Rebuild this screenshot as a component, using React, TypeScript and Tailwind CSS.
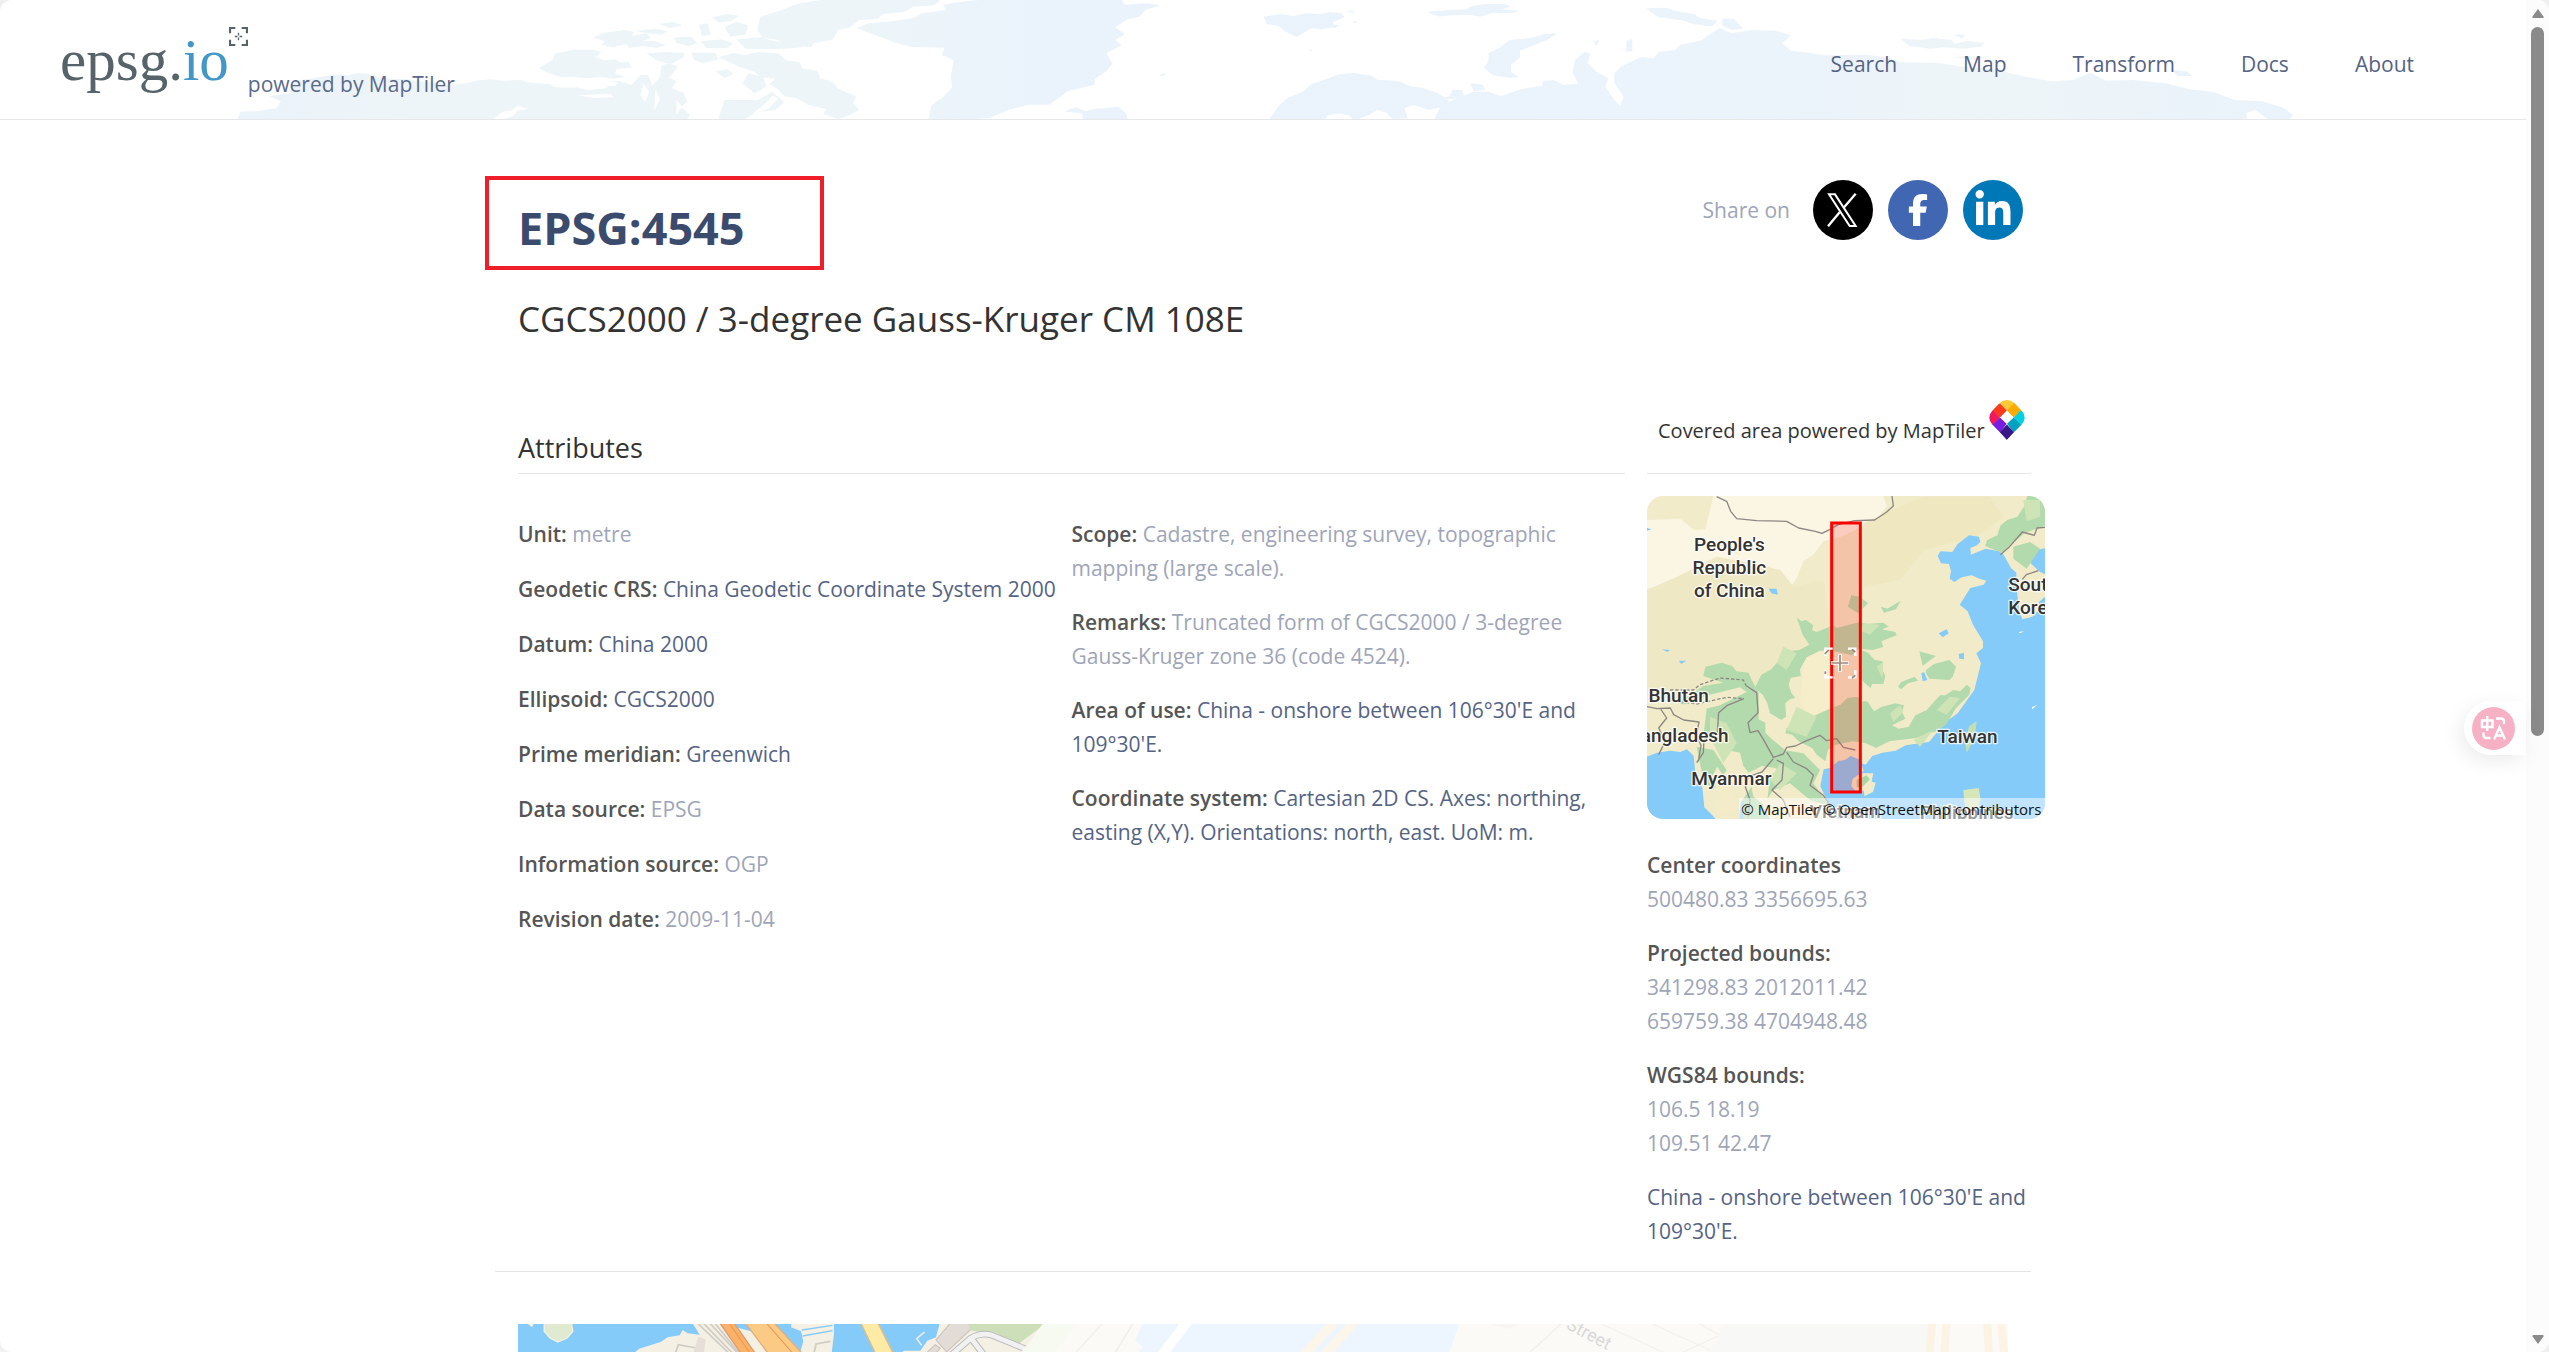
import { FaFacebookF, FaLinkedinIn } from "react-icons/fa6";

const navItems = ["Search", "Map", "Transform", "Docs", "About"];

const attributes = [
  { label: "Unit:", value: "metre" },
  { label: "Geodetic CRS:", value: "China Geodetic Coordinate System 2000", link: true },
  { label: "Datum:", value: "China 2000", link: true },
  { label: "Ellipsoid:", value: "CGCS2000", link: true },
  { label: "Prime meridian:", value: "Greenwich", link: true },
  { label: "Data source:", value: "EPSG" },
  { label: "Information source:", value: "OGP" },
  { label: "Revision date:", value: "2009-11-04" },
];

const details = [
  { label: "Scope:", value: "Cadastre, engineering survey, topographic mapping (large scale)." },
  { label: "Remarks:", value: "Truncated form of CGCS2000 / 3-degree Gauss-Kruger zone 36 (code 4524)." },
  { label: "Area of use:", value: "China - onshore between 106°30'E and 109°30'E.", link: true },
  {
    label: "Coordinate system:",
    value: "Cartesian 2D CS. Axes: northing, easting (X,Y). Orientations: north, east. UoM: m.",
    link: true,
  },
];

const bounds = [
  { label: "Center coordinates", lines: ["500480.83 3356695.63"] },
  { label: "Projected bounds:", lines: ["341298.83 2012011.42", "659759.38 4704948.48"] },
  { label: "WGS84 bounds:", lines: ["106.5 18.19", "109.51 42.47"] },
];

const WorldBackdrop = () => (
  <svg
    className="absolute inset-0 h-full w-full"
    viewBox="-133.5 0 1686 357"
    preserveAspectRatio="none"
    aria-hidden="true"
  >
    <defs>
      <linearGradient id="land" gradientUnits="userSpaceOnUse" x1="0" y1="0" x2="1400" y2="0">
        <stop offset="0" stopColor="#eaf2fb" />
        <stop offset="0.1" stopColor="#edf5f8" />
        <stop offset="0.3" stopColor="#edf5f8" />
        <stop offset="0.4" stopColor="#eaf3fb" />
        <stop offset="0.75" stopColor="#ebf3fb" />
        <stop offset="0.85" stopColor="#edf5f8" />
        <stop offset="1" stopColor="#eaf2fb" />
      </linearGradient>
    </defs>
    <g fill="url(#land)">
      <path d="M25 357l2-22 12-2 12-8 3-22-8-14 8-6 6-3 2-38 15-8 13-11 9 3 6-7 7 2 8 10 9 6 10 0 7 8 10 0 8 10 12-4 10-10 8-3 8 4 12-2 6 8 13 4 4 10 14 0 8 8 12-5 3-20 6-2 8 12 6-30 5 0 3 32 5-26 1-34 5-8 6 12-6 32 5 10-3 22 8 14 2 26-4 16 6 24-2 14z" />
      <path d="M226 205l9-24 2-20 12-12 14 0 5 8-4 14 6 10 7-3 4 10 5-4 2 20-10 2-1 14 7 12-8 4-10-4-8 4-9-6-8 2-9-14z" />
      <path d="M262 112l8-14 14-8 6 6-2 12 10-8 3 14-6 10 8-2 8 14-6 8-10-6-8 6-3-12-8 10-8-6 2-12z" />
      <path d="M290 92l14-6 8 8-4 10-10-4zM306 72l10-6 6 10-8 8zM316 112l12-2 4 20-6 8-8-10zM333 74l6-4 2 34-6 4zM342 52l10-10 8 6-6 16-8 4zM350 80l8-14 8 10-2 28-10 6zM334 124l14-6 8 12-4 14-14 0zM358 118l16-6 10 12 14 4 4 14-16 6-22-2z" />
      <path d="M298 160l14-4 12 4-2 14-8 18-8-8zM328 158l16 0 2 20-10 12-6-10z" />
      <path d="M346 172l10-12 8 6 8-10 14 4 6 22 8 4 2 20 10 6 2 22 8 12 4 20 12 24-2 18 4 22-8 18-6 9-10-14 2-16-12-12-8-20-8-6-4-20-6-18 4-14-10-6-4-16-10-14z" />
      <path d="M350 300l22 0 10-24 8 30-6 24-12 6-8 21-18 0zM344 214l8-6 4 14-6 12zM366 220l10 10 2 30-8 20-8-30z" />
      <path d="M372 92l2-42 12-16 14-24 14-10 80 0-4 16-14 4-6 16-14 6-4 16-12 2-6 22-8 8-4 30-12 8-2 14-14-4-10-20-8-4z" />
      <path d="M438 84l8-14 12-4 18-12 6-14 16-10-2-16 10-8 14-6 95 0 2 14 16-4 8 6-10 14-4 20-8 8-8 24 6 20-6 18 4 16-10 24 4 30-4 24-8 24 0 16-18 20-12 40-14 0-12 14-14 26-8 2-1 5-32 0 2-44 8-26 6-30-1-30 2-50-8-16 2-22-22-2-10-12z" />
      <path d="M577 334l8-12 6 12 6-8 8-2 8-4 5 20 1 17-30 0 0-16z" />
      <path d="M710 50l12-8 8 6 8-8 10 2 6-6 8 4 2 12-8 14 2 14-10 8-6-4-6 16-4 10-8-16-4-16-8-6zM752 76l8-2-2 10zM768 64l4 0 0 6z" />
      <path d="M819 36l14-6 12-2 4-10 8-6 14 0 4 8-6 8 12 4-6 8-12-2-8 12-8-6-12 2-8 4zM765 36l4-4 2 6z" />
      <path d="M906 100l-8 2-10 12-14 6-6 22-8 18 0 22-3 22 6 22 12 8 5-4-5-14 0-22 6-22 0-20 10-18 8-14z" />
      <path d="M714 357l6-40 6-24 10-18 6-24 10-14 8-14 10-4 12 8 4 12 14 4 8 16 8 4 10 16 8 24-4 18-10 8-10-14-6 10 2 30-10 2-4-18-6-10-6 16-8 14z" />
      <path d="M836 270l6 0 2 20-6 6-10 2 6-10zM848 250l8 4 2 16-8 4z" />
      <path d="M824 357L828 317 838 297 850 275 860 275 868 289 882 267 896 257 896 243 904 241 910 255 920 251 916 215 918 179 924 157 928 161 926 189 932 215 940 235 938 261 944 299 948 319 950 289 944 249 944 221 948 201 962 171 970 175 974 155 984 151 988 135 1002 121 1008 103 1014 84 1022 100 1036 90 1052 92 1062 106 1056 130 1062 152 1074 158 1084 166 1112 164 1126 172 1134 186 1162 190 1176 200 1196 206 1216 228 1236 244 1250 240 1262 218 1272 242 1290 240 1312 250 1328 268 1344 276 1358 300 1376 304 1390 322 1397 344 1395 357z" />
      <path d="M965 25l14-2 6 10 12 8 4 12 12 10-4 16-12-6-8-12-16-10zM1016 56l8 0 6 30-8 4-6-14zM952 122l4-4 0 34-4 4zM930 124l4-4-2 18z" />
      <path d="M1135 116l14 4 8-6 12 6 2 12 8-10 12 6-2 12-12 6-14-4-8 4-14-8zM1170 102l8 2-2 12zM1170 172l10-4 12 4-6 8zM1316 210l10 4 4 14-10 0z" />
      <path d="M640 224l5-4-3 10zM740 148l2 0 0 8z" />
    </g>
    <g fill="#fff">
      <path d="M196 357l6-22 6-4 4-14 7 10-7 4-3 18-6 8zM245 238l26-6-8 12 16 4-2 10-24 2 4-14zM252 286l22-4 2 10-14 2zM296 250l4 26-3 30-3-22zM304 268l3 30-4 34zM318 300l4 20-4 22zM753 346l6-6 8 6 2 11-18 0z" />
      <path d="M1366 338l6-8 8 27-14 0zM376 316l6-28 4 6-6 30-12 20z" />
    </g>
  </svg>
);

const Logo = () => (
  <a href="#" className="flex items-end pt-2 text-[21px] leading-[34px] text-[#5a6a8c]">
    <span className="flex items-start pb-2">
      <span className="font-['Liberation_Serif',serif] text-[59px] leading-[66px] text-[#566369]">
        epsg.<span className="text-[#4296c8]">io</span>
      </span>
      <svg width="19" height="19" viewBox="0 0 18 18" fill="none" stroke="#566369" aria-hidden="true">
        <path strokeWidth="2" d="M1 6V1H6M12 1H17V6M17 12V17H12M6 17H1V12" />
        <path strokeWidth="1.2" d="M9 5.5V8M9 10V12.5M5.5 9H8M10 9H12.5" />
      </svg>
    </span>
    <span>powered by MapTiler</span>
  </a>
);

const MapTilerIcon = () => (
  <svg className="h-10 w-9" viewBox="1031 720 103 117" aria-hidden="true">
    <clipPath id="pin">
      <path d="M1082 720q13 0 21 8l22 23q18 20 1 40l-44 46-43-46q-17-20 1-40l22-23q8-8 20-8z" />
    </clipPath>
    <g clipPath="url(#pin)">
      <path fill="#fbc935" d="M1082 700l30 30-30 21-20-21-10-10z" />
      <path fill="#ffaa01" d="M1082 751l20-21 30 0-10 22-20 19z" />
      <path fill="#fb3a1b" d="M1062 730l20 21-20 20-22-20-8-21z" />
      <path fill="#f1175d" d="M1042 751l20 20-20 22-20 0 0-42z" />
      <path fill="#05d0df" d="M1122 751l-20 20 20 22 20 0 0-42z" />
      <path fill="#781ee3" d="M1062 771l20 18-20 26-22-20 2-4z" />
      <path fill="#00a1c1" d="M1102 771l-20 18 20 26 22-20-2-4z" />
      <path fill="#3a1888" d="M1082 792l21 22-21 24-21-24z" />
    </g>
    <path fill="#fff" d="M1082 752l19 19-19 19-19-19z" />
  </svg>
);

const CoverageMap = () => (
  <svg
    className="-mr-[14px] block h-[323px] w-[398px] shrink-0 rounded-2xl"
    viewBox="51 48 1194 969"
    role="img"
    aria-label="Covered area"
  >
    <rect x="51" y="48" width="1194" height="969" fill="#f2ebc9" />
    {/* dry land */}
    <path
      fill="#fbf5e4"
      d="M250 48h510l10 30-30 40-60 30-40 20-60 16-30 40-30 20-20 50-20 30-40-24-20-40-60-12-50-40-30-22-60 10-60-14-40 30-60-30-14-30 60-10 60 10 60-4z"
    />
    <path fill="#fbf5e4" d="M51 120l100-4 60 50 120 60 60 10-60 20-120 20-90 40-70 10z" />
    <path
      fill="#efe8c4"
      d="M51 330l90-40 120-60 100 20 90 20 40 50 90-20 20 150-100 80-60 80-70 30-110-10-100 40-110-40z"
    />
    <path fill="#f6eecb" d="M540 500l60-10 20 50-10 100 30 80-30 60-70-40-30-80 10-100z" />
    <path fill="#efe7bf" d="M700 130l180-80 200 0 40 60-80 60-40 10-120 30-70 90-110 20z" />
    {/* sea */}
    <g fill="#84cbfa">
      <path d="M1245 205l-30 6-16 16 4 24 26 24 16 8zM1245 350l-18 16 0 24-20 20-30 8-10-30-8-70 0-40-16-14-22-40-14-10-40-8-30 12-14 6-2-20 20-8 10-10-4-16-30-4-34 26-16 24-36-2-8 14 10 22 24 2 6 22-4 22 14 10 22-14 30-6 24 10 20 6-8 12-40 10-32 50 24 20 16 40 30 50 0 20-20 16 14 30-20 80-50 70-36 26-50 60-70 10-30 16-40 6-30 10-20 26-16-6 10 24-10 6 6 20 40 10-8 28-30 14-30-12-10-24 20-26-10-30-20-16-24 0-14 20-30 6-10 50 40 90 40 20 0 20h600z" />
      <path d="M692 840l-30-12-14 10-36 14-24 30 0 30 16 24 30 40 40 40 30-60z" />
      <path d="M51 830l30-12 40-6 30 4 20-8 20 20 6 60 20 34 6 60 24 24 10 11H51zM327 1017l6-50 20-24 36 20 30 54z" />
      <path d="M416 326l24 0 4 18-20-4zM96 508l24 2-8 6zM146 542l22 0-14 10zM926 460l24-12 6 12-18 12zM874 580l8-4 10 24-14 4zM986 522l16-4 0 20-14-2zM51 144l14 4-14 4z" />
    </g>
    {/* islands */}
    <path fill="#c3dfb2" d="M1004 780l14-42 22-14-6 50-24 44z" />
    <path fill="#f4ebc8" d="M668 896l24-16 38 0-6 28-24 24-24 0-12-14z" />
    <path fill="#a9d8a7" d="M680 900l30-14 10 12-24 24-16 0z" />
    <path fill="#d7e6b9" d="M1000 930l46-6 6 34-14 40 10 19-36 0-8-44z" />
    <path fill="#fff" d="M1166 456l16-2-12 6zM1206 688l16-14-16 8z" />
    {/* forest */}
    <g fill="#b3daac">
      <path d="M500 412l14 12 14-4 22 16-4 14 14 6 50-20 10 8 70-18 20 6 50-4 16 12-20 8 40 8 4 10-46 18 6 16-30 10-44-4-20 20-60-14-36 0-40 20-20 36 2 20-30 6-6 20 8 24 12 16-16 4-14 12 2 40-14 10-34-20-8-30-14-26-24-20 20-40 30-16 20-24 30-30 34-4 30-16-20-30z" />
      <path d="M694 510l20 8 20 22 24 4-4 20 12 24-6 24-34 0-4 12-24-20-6-10zM690 350l24 20-30 30-30-20 10-34zM752 380l20 6 40-24-14 26-36 10z" />
      <path d="M612 680l20-6 20-20 30-4 14 14 16 0 20 30 24-14 40-10 26 6-6 20 10 20-40 20 20 10 30-6 20-34 34-16 40-44 16 0 24-16 20 4 20-20 12 10-4 20-40 40-30 50-30 20-60 20-80 10-40 20-30-14-40-6-50 10-24 16-8 34-26-20-14-20-40-20-20-20-20-4 4-16 20-8z" />
      <path d="M804 620l10-14 40-16 10 12-30 8-20 18zM868 514l50 14-14 10-26 20zM888 570l24-18 46-12 20 20-10 30-10 10-60-4-10-16z" />
      <path d="M226 560l50-12 30 10 14 16 36 4 10 24 20 36 0 80 20 10 0 30 20 20 50 40-20 60-20-14-40-6-40 20-16-20-10-40-50-10-20-30-40-10 10-80-90-20 50-30 30-20 60-10-60-20z" />
      <path d="M1072 180l30-14 10-30 20-16 30-10 20-30 10-32h53v90l-60 20-70 60-50-20zM1150 200l50-14 30 20-40 60-40-30z" />
      <path d="M460 810l60 10 50 50-20 40 50 70-60-20-60-50-50 20-40 60 30 27-80 0 0-60 40-60 60-20z" />
      <path d="M200 800l50 10 40 60-40 60-30-30zM536 750l60-14 16 24-56 10z" />
    </g>
    <g fill="#cfe4b6">
      <path d="M240 710l50 20 30 60-40 60-40-80zM460 500l40 20-30 50-30-20zM1180 60l50 0 0 50-40 14zM500 680l60 30-30 60-60-20zM450 850l50 30-50 50-30-30z" />
      <path d="M920 690l40-40 30 4-40 50zM740 560l20-14-2 50zM850 780l60-30-40 50zM700 430l50 4-30 30-24-10zM780 700l30-24 10 20-30 30z" />
    </g>
    <path fill="#f4ebc8" d="M262 860l40 60 20 60-50 30-12-20 10-40-24-60zM370 870l50 20-10 90-40-30-10-50z" />
    <path fill="#f2ebc9" d="M120 690l120-46 90-22 20 14-80 40-120 30z" />
    {/* borders */}
    <g fill="none" stroke="#8c8782" strokeWidth="4" strokeLinejoin="round">
      <path d="M260 50l30 14 12 30 18 22 60 6 90 2 36 20 50 10 20 6 24-12 24-14 50-12 60-2 36-24 20-18-4-30" />
      <path d="M1245 142l-24 2-8 22-36-10-40 46-26 22M1225 272l-36 12-12 14" />
      <path d="M51 680l30 6 40-2 10 20 30 16 46 6-8 40 14 30-8 48M90 684l20 30-24 30 20 40-20 40" />
      <path d="M342 656l-50 20-26 22-4 60-40 20-2 40-20 30M350 618l30 20 4 60-30 30 6 30 24-6 16 26 30 54 30-10 10-20 26-4 34-16 40-16 20 16 30-6 20 26 36 8" />
      <path d="M430 836l-34 40-40 14-10 30 14 40-6 50M440 840l20 10-4 50-30 30 34 30 20 50M470 816l20 30 40 20 20 20-10 30 40 30 40 60 20 20" />
      <path strokeDasharray="10 6" d="M120 630l70 0 20-16 60-20 70 6 10 20M120 660l80 12 90-20 50 4" />
    </g>
    {/* covered area */}
    <rect x="605" y="129" width="86" height="807" fill="#ff2828" fillOpacity="0.2" stroke="#f00" strokeWidth="9" />
    <g fill="none">
      <path stroke="#fff" strokeWidth="7" d="M586 528v-22h22M654 506h22v22M676 570v22h-22M608 592h-22v-22" />
      <path stroke="#8f8a80" strokeWidth="5" d="M584 522l12-12M666 508l10 8M676 586l-10 8M586 574v8" />
      <path stroke="#fff" strokeWidth="11" d="M630 522v54M603 549h54" />
      <path stroke="#a08878" strokeWidth="5" d="M630 524v50M605 549h50" />
    </g>
    <g
      className="font-['Roboto',sans-serif] text-[57px] font-medium"
      fill="#333"
      stroke="#fff"
      strokeOpacity="0.8"
      strokeWidth="8"
      paintOrder="stroke"
      strokeLinejoin="round"
      textAnchor="middle"
    >
      <text x="298" y="214">People's</text>
      <text x="298" y="283">Republic</text>
      <text x="298" y="351">of China</text>
      <text x="146" y="667">Bhutan</text>
      <text x="296" y="787" textAnchor="end">Bangladesh</text>
      <text x="304" y="914">Myanmar</text>
      <text x="1012" y="790">Taiwan</text>
      <text x="1135" y="334" textAnchor="start">South</text>
      <text x="1135" y="402" textAnchor="start">Korea</text>
      <text x="646" y="1014">Vietnam</text>
      <text x="1010" y="1018">Philippines</text>
    </g>
    <rect x="327" y="954" width="918" height="63" fill="#fff" fillOpacity="0.5" />
    <text x="1234" y="1004" textAnchor="end" className="font-['Open_Sans',sans-serif] text-[45px]" fill="#111">
      © MapTiler © OpenStreetMap contributors
    </text>
  </svg>
);

const StreetBanner = () => (
  <svg className="block h-[120px] w-full" viewBox="0 0 1491 120" preserveAspectRatio="none" aria-hidden="true">
    <rect width="1491" height="120" fill="#84cbfa" />
    <g transform="translate(-18 -24) scale(0.357 0.3333)">
      <path fill="#e0ead0" stroke="#f4f0e2" strokeWidth="4" d="M124 70h76l4 24-16 20-26 12-22-12-16-20z" />
      <path fill="#f5f0e4" d="M78 72l16 0-4 10zM370 164l20-18 60-20 20-14 34-6 8-16 14 10 34 4-20-34h80l140 40 40 54z" />
      <path fill="#f5f0e4" d="M816 72h120v30l-6 54-90 8 10-40-6-30-28-12zM1120 164l12-12 46 0 20-30 24-10 10-40h300v92z" />
      <path fill="none" stroke="#d0cdc6" strokeWidth="5" d="M556 72l90 92M572 72l84 92M590 72l80 92M604 72l70 92M490 164l10-30 50 10M880 160l6-28 40-8" />
      <path fill="#e5dfd8" d="M556 110l20 8-4 40h-30z" />
      <path fill="#fbb268" stroke="#d9a070" strokeWidth="4" d="M614 66h40l64 98h-40z" />
      <path fill="#fbcb85" stroke="#e3ae7c" strokeWidth="4" d="M686 66h80l84 98h-96z" />
      <path stroke="#ec9650" strokeWidth="3" d="M640 66l64 98M744 66l80 98" />
      <path stroke="#84cbfa" strokeWidth="4" d="M846 90l86-14M848 108l84-16" />
      <path fill="#ffeba6" stroke="#e0bd88" strokeWidth="4" d="M1010 66h48l46 98h-50z" />
      <path fill="none" stroke="#f5f0e4" strokeWidth="4" d="M1190 96l-22 20 14 20" />
      <path fill="#e3dcd6" stroke="#c9c2bb" strokeWidth="3" d="M1262 70h50l10 16-70 70-30-36zM1190 164l30-30 14 10-16 20z" />
      <path fill="#cddfb9" d="M1310 70h220l-80 64-60-36-70-6z" />
      <path fill="none" stroke="#bdbdc0" strokeWidth="20" d="M1260 170l60-56q30-18 60-8l100 44M1320 114l40 56" />
      <path fill="none" stroke="#f1f1f2" strokeWidth="14" d="M1260 170l60-56q30-18 60-8l100 44M1320 114l40 56" />
    </g>
    <path fill="#fbfaf7" d="M525 0h966v120H440z" />
    <g transform="translate(-38 -84) scale(1.0204 0.3333)">
      <path fill="#edf6fe" d="M650 252h310l-26 240H600l50-170-8-20z" />
      <path fill="#f6faf0" d="M555 252h30l-60 240h-40z" />
      <path stroke="#fff" strokeWidth="12" d="M692 252l-50 200" />
      <path stroke="#fcf5ea" strokeWidth="12" d="M836 252l-60 200M856 252l-60 200" />
      <path stroke="#f1f0ee" strokeWidth="2" d="M640 252l-40 200M610 252l-60 200M1060 252l-30 84M1100 252l60 84M1150 252l60 84M1196 252l50 84M1180 336l60-84M1230 336l60-84M1300 252l-40 84" />
      <path fill="#f8f8f7" d="M1220 252h200v240h-240z" />
      <path stroke="#fdf3e4" strokeWidth="8" d="M1424 252l-6 200M1438 252l-4 200M1478 252l4 200M1492 252l6 200" />
      <path fill="#f6f5f2" d="M990 252h32l-14 14z" />
    </g>
    <text transform="translate(1048 4) rotate(28)" className="font-['Roboto',sans-serif] text-[18px]" fill="#d9d9d9">
      Street
    </text>
  </svg>
);

const XLogo = () => (
  <svg className="size-full" viewBox="519 60 180 180" fill="none" stroke="#fff" aria-hidden="true">
    <path strokeWidth="6" d="M567 103H585L647 198H629z" />
    <path strokeWidth="7" d="M647 101L611 143M599 157L564 199" />
  </svg>
);

const Scrollbar = () => (
  <div className="flex w-[23px] shrink-0 flex-col items-center bg-[#fcfcfc] pt-[9px]" aria-hidden="true">
    <svg width="12" height="9" viewBox="0 0 12 9" fill="#8a8a8a">
      <path d="M6 0L11.5 7.5Q12 9 10.5 9H1.5Q0 9 .5 7.5z" />
    </svg>
    <div className="mt-[9px] h-[709px] w-[13px] rounded-full bg-[#8a8a8a]" />
    <svg className="mt-auto mb-2" width="12" height="9" viewBox="0 0 12 9" fill="#8a8a8a">
      <path d="M6 9L11.5 1.5Q12 0 10.5 0H1.5Q0 0 .5 1.5z" />
    </svg>
  </div>
);

const Entry = ({ label, value, link }: { label: string; value: string; link?: boolean }) => (
  <p className="text-[#9ea5b8]">
    <span className="font-semibold text-[#555]">{label}</span>{" "}
    {link ? (
      <a href="#" className="text-[#556384]">
        {value}
      </a>
    ) : (
      value
    )}
  </p>
);

export default function App() {
  return (
    <div className="h-screen bg-[#f0f0f0]">
      <div className="flex h-full overflow-hidden rounded-xl bg-white font-['Open_Sans',sans-serif] text-[21px] leading-[34px] text-[#333]">
        <div className="min-w-0 flex-1 overflow-hidden">
          <header className="relative border-b border-[#e5e7e9]">
            <WorldBackdrop />
            <div className="relative flex h-[119px] items-center justify-between pr-28 pl-[60px]">
              <Logo />
              <nav className="flex gap-[66px] pt-2">
                {navItems.map((item) => (
                  <a key={item} href="#" className="text-[#556384]">
                    {item}
                  </a>
                ))}
              </nav>
            </div>
          </header>

          <main className="mx-auto max-w-[1536px]">
            <div className="flex justify-between px-[23px] pt-[60px]">
              <div>
                <h1 className="relative text-[45px] leading-[96px] font-bold text-[#3b4b6d]">
                  EPSG:4545
                  <span className="absolute -top-1 -left-[33px] h-[94px] w-[339px] border-4 border-[#f01e28]" />
                </h1>
                <h2 className="text-[35px] leading-[86px]">CGCS2000 / 3-degree Gauss-Kruger CM 108E</h2>
              </div>
              <div className="-mr-[15px] flex h-[60px] items-center gap-[15px]">
                <span className="pr-2 text-[#9ea5b8]">Share on</span>
                <a href="#" aria-label="X" className="size-[60px] rounded-full bg-black">
                  <XLogo />
                </a>
                <a
                  href="#"
                  aria-label="Facebook"
                  className="flex size-[60px] items-center justify-center rounded-full bg-[#4267b2] text-white"
                >
                  <FaFacebookF className="size-8" />
                </a>
                <a
                  href="#"
                  aria-label="LinkedIn"
                  className="flex size-[60px] items-center justify-center rounded-full bg-[#0077b7] text-white"
                >
                  <FaLinkedinIn className="size-10" />
                </a>
              </div>
            </div>

            <div className="flex gap-[22px] pt-[38px] pl-[23px]">
              <section className="flex-1">
                <h3 className="flex h-[74px] items-end border-b border-[#e6e6e6] pb-[7px] text-[27px] leading-[36px]">
                  Attributes
                </h3>
                <div className="grid grid-cols-2 pt-[43px]">
                  <div className="flex flex-col gap-[21px]">
                    {attributes.map((item) => (
                      <Entry key={item.label} {...item} />
                    ))}
                  </div>
                  <div className="flex flex-col gap-5">
                    {details.map((item) => (
                      <Entry key={item.label} {...item} />
                    ))}
                  </div>
                </div>
              </section>

              <aside className="w-[384px]">
                <div className="flex h-[74px] items-start gap-1 border-b border-[#e6e6e6] pl-[11px]">
                  <span className="pt-[13px] text-[20px] leading-[36px]">Covered area powered by MapTiler</span>
                  <MapTilerIcon />
                </div>
                <div className="flex pt-[22px]">
                  <CoverageMap />
                </div>
                <div className="flex flex-col gap-5 pt-[29px] pb-[23px] text-[#9ea5b8]">
                  {bounds.map((item) => (
                    <div key={item.label}>
                      <h4 className="font-semibold text-[#555]">{item.label}</h4>
                      {item.lines.map((line) => (
                        <p key={line}>{line}</p>
                      ))}
                    </div>
                  ))}
                  <a href="#" className="text-[#556384]">
                    China - onshore between 106°30'E and 109°30'E.
                  </a>
                </div>
              </aside>
            </div>

            <hr className="border-[#e3e3e3]" />
            <div className="px-[23px] pt-[52px]">
              <StreetBanner />
            </div>
          </main>
        </div>
        <Scrollbar />
      </div>

      <button
        type="button"
        aria-label="Translate"
        className="fixed top-[701px] right-[23px] flex h-[54px] w-[62px] items-center rounded-l-full bg-white pl-2 shadow-[-4px_6px_20px_rgba(0,0,0,0.08)]"
      >
        <svg className="size-[43px]" viewBox="0 0 43 43" fill="none" stroke="#fff" strokeWidth="2.4" aria-hidden="true">
          <circle cx="21.5" cy="21.5" r="21.5" fill="#f6b1c5" stroke="none" />
          <path d="M10 13.5H20.5V20H10zM15.2 9V24M24 11.5H29Q32 11.5 32 14.5V17M11.5 25.5V28Q11.5 31 14.5 31H18.5M22 32.5L27.5 20.5 33 32.5M24 28.5H31" />
        </svg>
      </button>
    </div>
  );
}
